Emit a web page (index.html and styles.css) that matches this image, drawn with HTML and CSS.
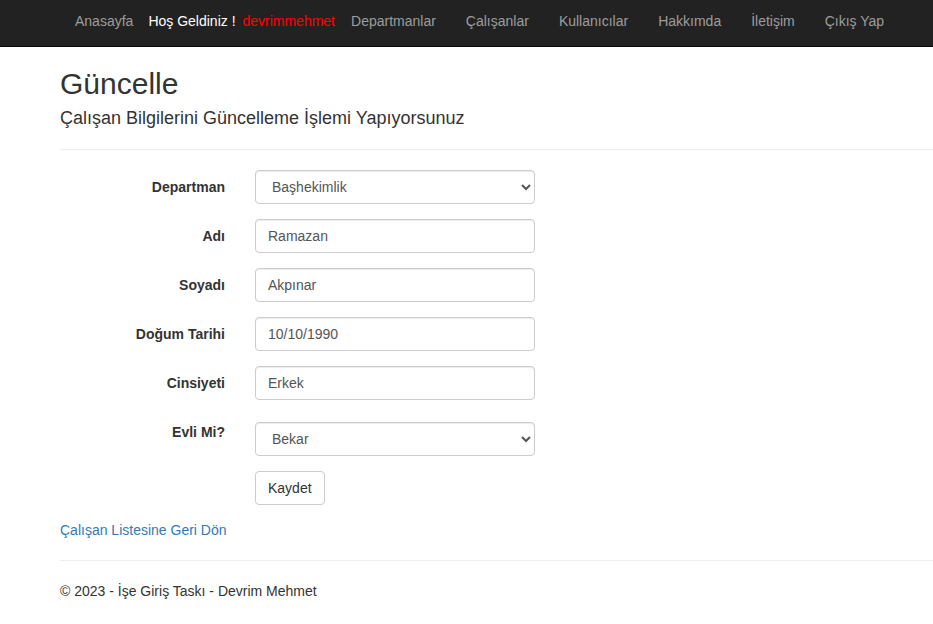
FILE: index.html
```html
<!DOCTYPE html>
<html lang="tr">
<head>
<meta charset="utf-8">
<title>Güncelle</title>
<link rel="stylesheet" href="styles.css">
</head>
<body>
<nav class="navbar">
  <ul class="nav">
    <li><a href="#">Anasayfa</a></li>
    <li class="welcome"><span class="hello">Hoş Geldiniz !</span> <span class="user">devrimmehmet</span></li>
    <li><a href="#">Departmanlar</a></li>
    <li><a href="#">Çalışanlar</a></li>
    <li><a href="#">Kullanıcılar</a></li>
    <li><a href="#">Hakkımda</a></li>
    <li><a href="#">İletişim</a></li>
    <li><a href="#">Çıkış Yap</a></li>
  </ul>
</nav>
<main class="content">
  <h2 class="title">Güncelle</h2>
  <h4 class="subtitle">Çalışan Bilgilerini Güncelleme İşlemi Yapıyorsunuz</h4>
  <hr class="rule">
  <form class="form">
    <div class="row">
      <label class="label">Departman</label>
      <select class="control select"><option>Başhekimlik</option></select>
    </div>
    <div class="row">
      <label class="label">Adı</label>
      <input class="control" type="text" value="Ramazan">
    </div>
    <div class="row">
      <label class="label">Soyadı</label>
      <input class="control" type="text" value="Akpınar">
    </div>
    <div class="row">
      <label class="label">Doğum Tarihi</label>
      <input class="control" type="text" value="10/10/1990">
    </div>
    <div class="row">
      <label class="label">Cinsiyeti</label>
      <input class="control" type="text" value="Erkek">
    </div>
    <div class="row row-evli">
      <label class="label label-top">Evli Mi?</label>
      <select class="control select"><option>Bekar</option></select>
    </div>
    <div class="row">
      <span class="label"></span>
      <div><button type="button" class="btn">Kaydet</button></div>
    </div>
  </form>
  <div class="back"><a href="#">Çalışan Listesine Geri Dön</a></div>
  <hr class="rule footer-rule">
  <footer class="footer">© 2023 - İşe Giriş Taskı - Devrim Mehmet</footer>
</main>
</body>
</html>
```
FILE: styles.css
```css
* { box-sizing: border-box; }
html, body { margin: 0; padding: 0; }
body {
  font-family: "Liberation Sans", Arial, sans-serif;
  font-size: 14px;
  line-height: 20px;
  color: #333;
  background: #fff;
}
.navbar {
  background: #222;
  border-bottom: 1px solid #080808;
  height: 47px;
  padding-left: 60px;
}
.nav {
  list-style: none;
  margin: 0;
  padding: 0;
  display: flex;
  align-items: center;
  height: 46px;
}
.nav li a {
  display: block;
  padding: 11px 15px 15px;
  color: #9d9d9d;
  text-decoration: none;
  font-size: 14px;
}
.welcome {
  padding: 11px 1px 15px 0;
  white-space: nowrap;
}
.hello { color: #fff; }
.user { color: #f00; margin-left: 3px; }
.content {
  padding-left: 60px;
}
.title {
  font-size: 30px;
  font-weight: 500;
  line-height: 33px;
  margin: 20px 0 8px;
}
.subtitle {
  font-size: 18px;
  font-weight: 500;
  line-height: 20px;
  margin: 8px 0 11px;
}
.rule {
  border: 0;
  border-top: 1px solid #eee;
  margin: 21px 0 20px;
}
.form {
  display: flex;
  flex-direction: column;
  gap: 15px;
}
.row {
  display: grid;
  grid-template-columns: 165px 280px;
  column-gap: 30px;
}
.row-evli { margin-top: 7px; }
.label {
  text-align: right;
  font-weight: bold;
  padding-top: 7px;
}
.label-top { padding-top: 0; }
.control {
  display: block;
  width: 280px;
  height: 34px;
  padding: 6px 12px;
  font-family: "Liberation Sans", Arial, sans-serif;
  font-size: 14px;
  color: #555;
  background: #fff;
  border: 1px solid #ccc;
  border-radius: 4px;
  box-shadow: inset 0 1px 1px rgba(0,0,0,.075);
}
.select {
  padding: 6px 8px 6px 12px;
}
.btn {
  font-family: "Liberation Sans", Arial, sans-serif;
  font-size: 14px;
  line-height: 20px;
  color: #333;
  background: #fff;
  border: 1px solid #ccc;
  border-radius: 4px;
  padding: 6px 12px;
  height: 34px;
}
.back {
  margin-top: 15px;
}
.back a {
  color: #337ab7;
  text-decoration: none;
}
.footer-rule { margin: 20px 0 20px; }
.footer { line-height: 20px; }
```
